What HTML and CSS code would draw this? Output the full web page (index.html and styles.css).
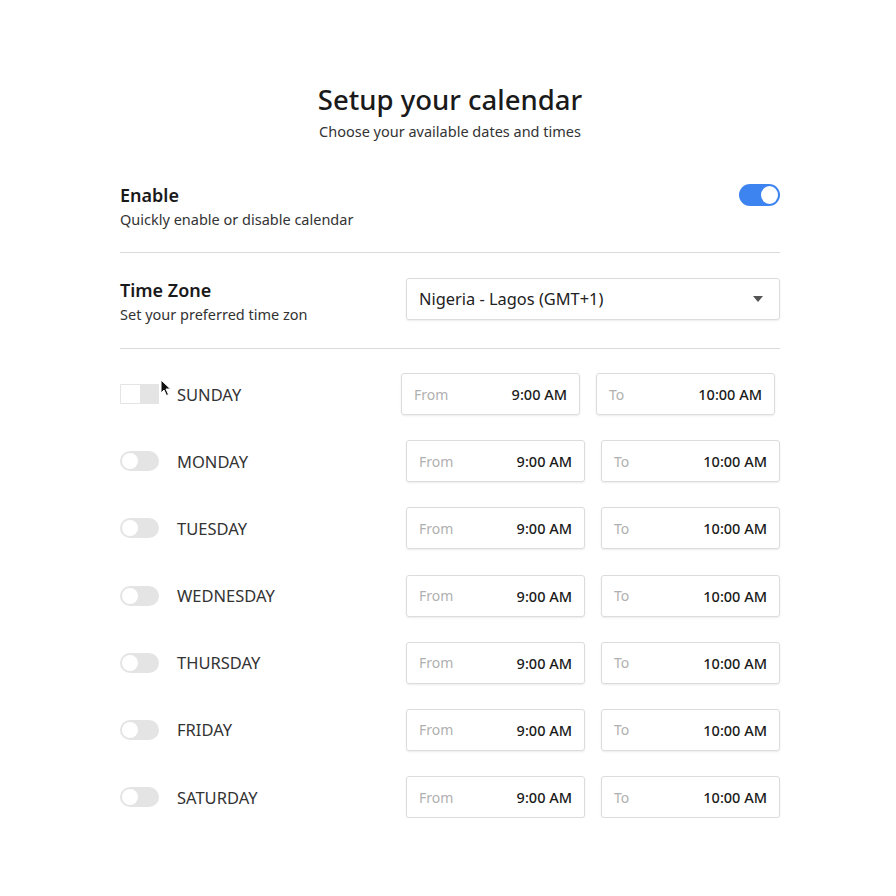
FILE: index.html
```html
<!DOCTYPE html>
<html lang="en">
<head>
<meta charset="utf-8">
<title>Setup your calendar</title>
<link rel="stylesheet" href="styles.css">
</head>
<body>
<main class="page">
  <header class="header">
    <h1 class="title">Setup your calendar</h1>
    <p class="subtitle">Choose your available dates and times</p>
  </header>

  <section class="setting setting-enable">
    <div class="setting-text">
      <h2 class="setting-title">Enable</h2>
      <p class="setting-desc">Quickly enable or disable calendar</p>
    </div>
    <span class="switch switch-on"><span class="knob"></span></span>
  </section>

  <hr class="divider">

  <section class="setting setting-tz">
    <div class="setting-text">
      <h2 class="setting-title">Time Zone</h2>
      <p class="setting-desc">Set your preferred time zon</p>
    </div>
    <div class="select">
      <span class="select-value">Nigeria - Lagos (GMT+1)</span>
      <span class="caret"></span>
    </div>
  </section>

  <hr class="divider">

  <ul class="days">
    <li class="day day-shift">
      <span class="switch switch-square"><span class="knob"></span></span>
      <svg class="cursor" width="12" height="18" viewBox="0 0 12 18"><path d="M1 1 L1 14 L4 11 L6.5 16.5 L8.5 15.5 L6 10 L10.5 10 Z" fill="#111" stroke="#fff" stroke-width="1"/></svg>
      <span class="day-name">SUNDAY</span>
      <div class="times">
        <div class="time"><span class="time-label">From</span><span class="time-value">9:00 AM</span></div>
        <div class="time"><span class="time-label">To</span><span class="time-value">10:00 AM</span></div>
      </div>
    </li>
    <li class="day">
      <span class="switch"><span class="knob"></span></span>
      <span class="day-name">MONDAY</span>
      <div class="times">
        <div class="time"><span class="time-label">From</span><span class="time-value">9:00 AM</span></div>
        <div class="time"><span class="time-label">To</span><span class="time-value">10:00 AM</span></div>
      </div>
    </li>
    <li class="day">
      <span class="switch"><span class="knob"></span></span>
      <span class="day-name">TUESDAY</span>
      <div class="times">
        <div class="time"><span class="time-label">From</span><span class="time-value">9:00 AM</span></div>
        <div class="time"><span class="time-label">To</span><span class="time-value">10:00 AM</span></div>
      </div>
    </li>
    <li class="day">
      <span class="switch"><span class="knob"></span></span>
      <span class="day-name">WEDNESDAY</span>
      <div class="times">
        <div class="time"><span class="time-label">From</span><span class="time-value">9:00 AM</span></div>
        <div class="time"><span class="time-label">To</span><span class="time-value">10:00 AM</span></div>
      </div>
    </li>
    <li class="day">
      <span class="switch"><span class="knob"></span></span>
      <span class="day-name">THURSDAY</span>
      <div class="times">
        <div class="time"><span class="time-label">From</span><span class="time-value">9:00 AM</span></div>
        <div class="time"><span class="time-label">To</span><span class="time-value">10:00 AM</span></div>
      </div>
    </li>
    <li class="day">
      <span class="switch"><span class="knob"></span></span>
      <span class="day-name">FRIDAY</span>
      <div class="times">
        <div class="time"><span class="time-label">From</span><span class="time-value">9:00 AM</span></div>
        <div class="time"><span class="time-label">To</span><span class="time-value">10:00 AM</span></div>
      </div>
    </li>
    <li class="day">
      <span class="switch"><span class="knob"></span></span>
      <span class="day-name">SATURDAY</span>
      <div class="times">
        <div class="time"><span class="time-label">From</span><span class="time-value">9:00 AM</span></div>
        <div class="time"><span class="time-label">To</span><span class="time-value">10:00 AM</span></div>
      </div>
    </li>
  </ul>
</main>
</body>
</html>
```

FILE: styles.css
```css
* { box-sizing: border-box; }

html, body {
  margin: 0;
  padding: 0;
  background: #ffffff;
}

body {
  font-family: "Noto Sans", "Open Sans", sans-serif;
  color: #222;
}

.page {
  width: 660px;
  margin: 0 0 0 120px;
  padding-top: 84px;
}

.header {
  text-align: center;
}

.title {
  margin: 0;
  font-size: 27.5px;
  line-height: 32px;
  font-weight: 500;
  color: #1a1a1a;
}

.subtitle {
  margin: 6px 0 0;
  font-size: 14.5px;
  line-height: 18px;
  color: #333;
}

.setting {
  display: flex;
  align-items: flex-start;
  justify-content: space-between;
}

.setting-enable {
  margin-top: 43px;
}

.setting-enable .switch {
  margin-top: 1px;
}

.setting-title {
  margin: 0;
  font-size: 18px;
  line-height: 24px;
  font-weight: 600;
  color: #1a1a1a;
}

.setting-desc {
  margin: 2px 0 0;
  font-size: 14.5px;
  line-height: 20px;
  color: #333;
}

.divider {
  border: 0;
  border-top: 1px solid #dadada;
  margin: 0;
}

.setting-enable + .divider {
  margin-top: 23px;
}

.setting-tz {
  margin-top: 25px;
}

.setting-tz + .divider {
  margin-top: 24px;
}

.select {
  width: 374px;
  height: 42px;
  border: 1px solid #dcdcdf;
  border-radius: 3px;
  box-shadow: 0 1px 2px rgba(0, 0, 0, 0.08);
  display: flex;
  align-items: center;
  justify-content: space-between;
  padding: 0 16px 0 12px;
}

.select-value {
  font-size: 16.4px;
  color: #222;
  margin-top: -2px;
}

.caret {
  width: 0;
  height: 0;
  border-left: 5px solid transparent;
  border-right: 5px solid transparent;
  border-top: 6px solid #555;
}

.switch {
  position: relative;
  display: inline-block;
  width: 39px;
  height: 20px;
  border-radius: 10px;
  background: #e4e4e4;
  flex: none;
}

.switch .knob {
  position: absolute;
  top: 2px;
  left: 2px;
  width: 16px;
  height: 16px;
  border-radius: 50%;
  background: #fff;
}

.switch-on {
  width: 41px;
  height: 22px;
  border-radius: 11px;
  background: #3d84f0;
}

.switch-on .knob {
  left: 22px;
  width: 17px;
  height: 18px;
}

.switch-square {
  border-radius: 1px;
}

.switch-square .knob {
  top: 1px;
  left: 1px;
  width: 19px;
  height: 18px;
  border-radius: 0;
}

.days {
  list-style: none;
  margin: 24px 0 0;
  padding: 0;
  display: flex;
  flex-direction: column;
  gap: 25.2px;
}

.day {
  position: relative;
  display: flex;
  align-items: center;
  height: 42px;
}

.day-name {
  margin-left: 18px;
  font-size: 16.5px;
  color: #333;
  flex: 1;
}

.cursor {
  position: absolute;
  left: 40px;
  top: 6px;
}

.times {
  display: flex;
  gap: 16px;
}

.day-shift .times {
  margin-right: 5px;
}

.time {
  width: 179px;
  height: 42px;
  border: 1px solid #dcdcdf;
  border-radius: 3px;
  box-shadow: 0 1px 2px rgba(0, 0, 0, 0.08);
  display: flex;
  align-items: center;
  justify-content: space-between;
  padding: 0 12px;
}

.time-label {
  font-size: 14px;
  color: #b0b0b0;
}

.time-value {
  font-size: 14.5px;
  font-weight: 500;
  color: #1a1a1a;
}
```
